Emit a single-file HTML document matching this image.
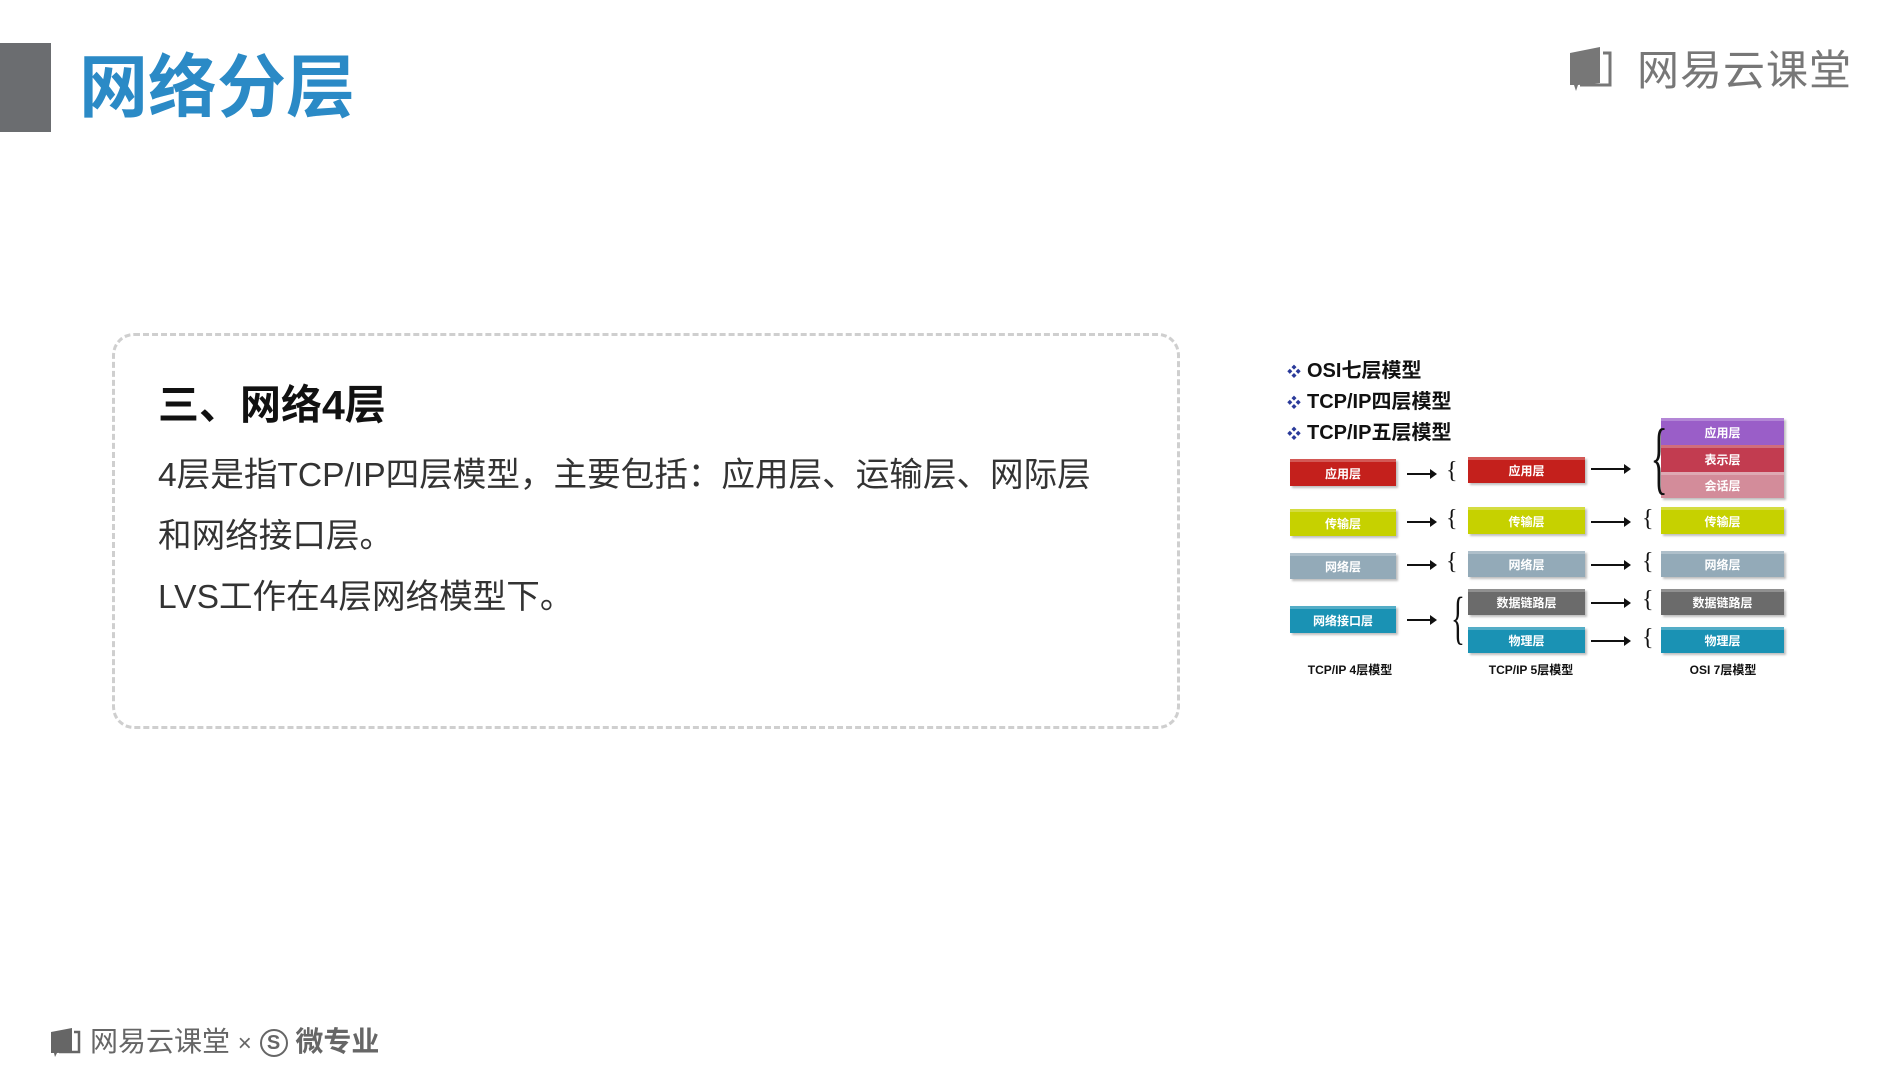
<!DOCTYPE html>
<html><head><meta charset="utf-8"><style>
body{margin:0;width:1902px;height:1073px;background:#fff;position:relative;overflow:hidden;font-family:"Liberation Sans","Noto Sans CJK SC",sans-serif}
.a{position:absolute}
.bx{position:absolute;color:#fff;font-size:12px;font-weight:bold;text-align:center;box-shadow:2px 2px 2px rgba(0,0,0,.25);border-top:3px solid rgba(255,255,255,.25);box-sizing:border-box}
.ar{position:absolute;height:2px;background:#111}
.ar:after{content:"";position:absolute;right:-2px;top:-4px;border-left:7px solid #111;border-top:5px solid transparent;border-bottom:5px solid transparent}
.br{position:absolute;font-size:24px;color:#111;line-height:1;font-family:"Liberation Serif",serif}
.lb{position:absolute;font-size:12px;font-weight:bold;color:#111;width:130px;text-align:center}
.bl{position:absolute;left:1287px;font-size:20px;font-weight:bold;color:#111;white-space:nowrap}
.bl b{color:#2a3a9a;font-size:14px;margin-right:6px}
</style></head><body>
<div class="a" style="left:0;top:43px;width:51px;height:89px;background:#6b6d70"></div>
<div class="a" style="left:79px;top:48px;font-size:69px;font-weight:bold;color:#2b8ac6;line-height:80px">网络分层</div>

<svg class="a" style="left:1568px;top:45px" width="46" height="47" viewBox="0 0 46 47"><path d="M2 8 L32 2 L32 38 L10 40 L8 46 L6 40 L2 40 Z" fill="#777"/><path d="M35 8 H42 V40 H12" fill="none" stroke="#777" stroke-width="3"/></svg>
<div class="a" style="left:1637px;top:44px;font-size:42px;color:#777;line-height:54px;letter-spacing:1px">网易云课堂</div>

<div class="a" style="left:112px;top:333px;width:1062px;height:390px;border:3px dashed #cfcfcf;border-radius:22px"></div>
<div class="a" style="left:158px;top:381px;font-size:41px;font-weight:bold;color:#111;line-height:48px">三、网络4层</div>
<div class="a" style="left:158px;top:445px;font-size:33.6px;color:#333;line-height:61px;width:980px">4层是指TCP/IP四层模型，主要包括：应用层、运输层、网际层<br>和网络接口层。<div>LVS工作在4层网络模型下。</div></div>

<div class="bl" style="top:354px"><b>❖</b>OSI七层模型</div>
<div class="bl" style="top:385px"><b>❖</b>TCP/IP四层模型</div>
<div class="bl" style="top:416px"><b>❖</b>TCP/IP五层模型</div>

<div class="bx" style="left:1290px;top:459px;width:106px;height:27px;background:#c4201c;line-height:24px">应用层</div>
<div class="bx" style="left:1290px;top:509px;width:106px;height:27px;background:#c6d100;line-height:24px">传输层</div>
<div class="bx" style="left:1290px;top:553px;width:106px;height:26px;background:#93aab8;line-height:23px">网络层</div>
<div class="bx" style="left:1290px;top:606px;width:106px;height:27px;background:#1a92b4;line-height:24px">网络接口层</div>

<div class="bx" style="left:1468px;top:457px;width:117px;height:26px;background:#c4201c;line-height:23px">应用层</div>
<div class="bx" style="left:1468px;top:507px;width:117px;height:27px;background:#c6d100;line-height:24px">传输层</div>
<div class="bx" style="left:1468px;top:551px;width:117px;height:26px;background:#93aab8;line-height:23px">网络层</div>
<div class="bx" style="left:1468px;top:589px;width:117px;height:26px;background:#6b6b6b;line-height:23px">数据链路层</div>
<div class="bx" style="left:1468px;top:627px;width:117px;height:26px;background:#1a92b4;line-height:23px">物理层</div>

<div class="bx" style="left:1661px;top:418px;width:123px;height:27px;background:#9a5ec8;line-height:24px">应用层</div>
<div class="bx" style="left:1661px;top:445px;width:123px;height:27px;background:#c23c50;line-height:24px">表示层</div>
<div class="bx" style="left:1661px;top:472px;width:123px;height:26px;background:#d38c9a;line-height:23px">会话层</div>
<div class="bx" style="left:1661px;top:507px;width:123px;height:27px;background:#c6d100;line-height:24px">传输层</div>
<div class="bx" style="left:1661px;top:551px;width:123px;height:26px;background:#93aab8;line-height:23px">网络层</div>
<div class="bx" style="left:1661px;top:589px;width:123px;height:26px;background:#6b6b6b;line-height:23px">数据链路层</div>
<div class="bx" style="left:1661px;top:627px;width:123px;height:26px;background:#1a92b4;line-height:23px">物理层</div>

<div class="ar" style="left:1407px;top:473px;width:28px"></div><div class="br" style="left:1446px;top:459px">{</div>
<div class="ar" style="left:1407px;top:521px;width:28px"></div><div class="br" style="left:1446px;top:507px">{</div>
<div class="ar" style="left:1407px;top:564px;width:28px"></div><div class="br" style="left:1446px;top:550px">{</div>
<div class="ar" style="left:1407px;top:619px;width:28px"></div><div class="br" style="left:1444px;top:589px;font-size:58px;transform:scaleX(.5)">{</div>
<div class="ar" style="left:1591px;top:468px;width:38px"></div><div class="br" style="left:1640px;top:418px;font-size:80px;transform:scaleX(.45)">{</div>
<div class="ar" style="left:1591px;top:521px;width:38px"></div><div class="br" style="left:1642px;top:507px">{</div>
<div class="ar" style="left:1591px;top:564px;width:38px"></div><div class="br" style="left:1642px;top:550px">{</div>
<div class="ar" style="left:1591px;top:602px;width:38px"></div><div class="br" style="left:1642px;top:588px">{</div>
<div class="ar" style="left:1591px;top:640px;width:38px"></div><div class="br" style="left:1642px;top:626px">{</div>

<div class="lb" style="left:1285px;top:661px">TCP/IP 4层模型</div>
<div class="lb" style="left:1466px;top:661px">TCP/IP 5层模型</div>
<div class="lb" style="left:1658px;top:661px">OSI 7层模型</div>

<svg class="a" style="left:50px;top:1027px" width="32" height="30" viewBox="0 0 32 30"><path d="M1 5 L22 1 L22 25 L7 26 L5 30 L4 26 L1 26 Z" fill="#666"/><path d="M24 5 H29 V25 H9" fill="none" stroke="#666" stroke-width="2.5"/></svg>
<div class="a" style="left:90px;top:1025px;font-size:28px;color:#666;line-height:34px;white-space:nowrap">网易云课堂 <span style="font-size:24px">×</span> <span style="display:inline-block;width:28px;height:28px;border:2px solid #666;border-radius:50%;font-size:20px;line-height:25px;text-align:center;vertical-align:2px;box-sizing:border-box;font-weight:bold">S</span><b> 微专业</b></div>
</body></html>
